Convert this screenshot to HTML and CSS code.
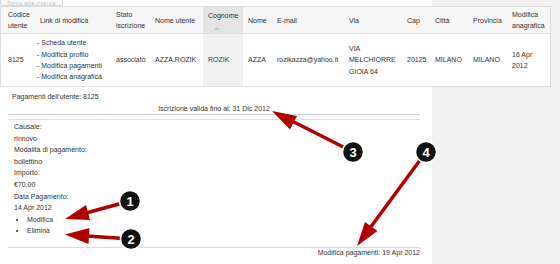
FILE: index.html
```html
<!DOCTYPE html>
<html lang="it">
<head>
    <meta charset="UTF-8">
    <meta name="viewport" content="width=device-width, initial-scale=1.0">
    <title>Pagamenti utente</title>
    <link rel="stylesheet" href="styles.css">
</head>
<body>
    <div class="main">
        <button class="back-btn">Torna alla ricerca</button>
        <table class="users">
            <colgroup>
                <col style="width: 34px">
                <col style="width: 76px">
                <col style="width: 39px">
                <col style="width: 53px">
                <col style="width: 40px">
                <col style="width: 29px">
                <col style="width: 72px">
                <col style="width: 58px">
                <col style="width: 28px">
                <col style="width: 38px">
                <col style="width: 39px">
                <col style="width: 43px">
            </colgroup>
            <thead>
                <tr>
                    <th class="first">Codice<br>utente</th>
                    <th>Link di modifica</th>
                    <th>Stato<br>iscrizione</th>
                    <th>Nome utente</th>
                    <th class="sorted">Cognome<span class="sort-arrow"></span></th>
                    <th>Nome</th>
                    <th>E-mail</th>
                    <th>Via</th>
                    <th>Cap</th>
                    <th>Città</th>
                    <th>Provincia</th>
                    <th>Modifica<br>anagrafica</th>
                </tr>
            </thead>
            <tbody>
                <tr>
                    <td class="first">8125</td>
                    <td>
                        <ul class="edit-links">
                            <li>- Scheda utente</li>
                            <li>- Modifica profilo</li>
                            <li>- Modifica pagamenti</li>
                            <li>- Modifica anagrafica</li>
                        </ul>
                    </td>
                    <td>associato</td>
                    <td>AZZA.ROZIK</td>
                    <td class="sorted">ROZIK</td>
                    <td>AZZA</td>
                    <td>rozikazza@yahoo.it</td>
                    <td>VIA<br>MELCHIORRE<br>GIOIA 64</td>
                    <td>20125</td>
                    <td>MILANO</td>
                    <td>MILANO</td>
                    <td>16 Apr<br>2012</td>
                </tr>
            </tbody>
        </table>

        <div class="payments">
            <div class="payments-title">Pagamenti dell'utente: 8125</div>
            <div class="valid-until">Iscrizione valida fino al: 31 Dic 2012</div>
            <div class="double-rule"></div>
            <div class="payment">
                <div>Causale:</div>
                <div>rinnovo</div>
                <div>Modalità di pagamento:</div>
                <div>bollettino</div>
                <div>Importo:</div>
                <div>€70.00</div>
                <div>Data Pagamento:</div>
                <div>14 Apr 2012</div>
                <ul class="actions">
                    <li>Modifica</li>
                    <li>Elimina</li>
                </ul>
            </div>
            <div class="last-change">Modifica pagamenti: 19 Apr 2012</div>
        </div>
    </div>

    <svg class="callouts" width="560" height="264" viewBox="0 0 560 264">
        <g class="arrow">
            <line x1="86" y1="213" x2="130" y2="201"/>
            <polygon points="65,219 90,220 86,205"/>
        </g>
        <g class="arrow">
            <line x1="87" y1="236" x2="131" y2="239"/>
            <polygon points="65,234.5 88.5,244 89.5,228"/>
        </g>
        <g class="arrow">
            <line x1="292" y1="121" x2="353" y2="152"/>
            <polygon points="272,111 290,129.5 297,116"/>
        </g>
        <g class="arrow">
            <line x1="370" y1="228" x2="426" y2="152"/>
            <polygon points="357,246 377.5,231 365,222"/>
        </g>
        <g class="badge">
            <circle cx="130" cy="201" r="10.5"/>
            <text x="130" y="201">1</text>
        </g>
        <g class="badge">
            <circle cx="131" cy="239" r="10.5"/>
            <text x="131" y="239">2</text>
        </g>
        <g class="badge">
            <circle cx="353" cy="152" r="10.5"/>
            <text x="353" y="152">3</text>
        </g>
        <g class="badge">
            <circle cx="426" cy="152" r="10.5"/>
            <text x="426" y="152">4</text>
        </g>
    </svg>
</body>
</html>
```

FILE: styles.css
```css
* {
    margin: 0;
    padding: 0;
    box-sizing: border-box;
}
html, body {
    width: 100%;
    height: 100%;
}
body {
    position: relative;
    overflow: hidden;
    font-family: "Liberation Sans", Arial, sans-serif;
    font-size: 7px;
    color: #333;
    background-color: #f1f1f1;
}
.main {
    width: 432px;
    height: 100%;
    background-color: #fff;
}
.back-btn {
    display: block;
    width: 63px;
    height: 6px;
    padding: 0 0 0 6px;
    font-family: inherit;
    font-size: 5px;
    line-height: 4px;
    letter-spacing: 0.6px;
    text-align: left;
    color: #c4c4c4;
    background-color: #f7f7f7;
    border: 1px solid #d6d6d6;
    border-top: none;
    border-radius: 0 0 2px 2px;
}
.users {
    width: 551px;
    table-layout: fixed;
    border-collapse: separate;
    border-spacing: 0;
    border: 1px solid #dedede;
    background-color: #fff;
}
.users th, .users td {
    padding: 0 2px 0 5px;
    text-align: left;
    vertical-align: middle;
    font-weight: normal;
    white-space: nowrap;
}
.users th {
    height: 27px;
    line-height: 11px;
    background-color: #f6f6f6;
    border-bottom: 1px solid #dedede;
}
.users td {
    height: 52px;
    line-height: 11.3px;
}
.users .first {
    padding-left: 7px;
}
.users th.sorted {
    background-color: #e4e4e4;
}
.users td.sorted {
    background-color: #f1f1f1;
}
.sort-arrow {
    display: block;
    width: 0;
    height: 0;
    margin: 6px 0 0 6px;
    border-left: 3px solid transparent;
    border-right: 3px solid transparent;
    border-bottom: 3px solid #c4c4c4;
}
.edit-links {
    list-style: none;
    margin-left: -3px;
}
.payments {
    padding: 4px 12px 0 8px;
}
.payments-title {
    padding-left: 4px;
    line-height: 11.5px;
}
.valid-until {
    text-align: center;
    line-height: 11.5px;
}
.double-rule {
    height: 6px;
    border-top: 1px solid #d4d4d4;
    border-bottom: 1px solid #e0e0e0;
}
.payment {
    padding: 1px 6px 10px;
    line-height: 11.6px;
}
.actions {
    padding-left: 13px;
}
.last-change {
    border-top: 1px solid #dcdcdc;
    text-align: right;
    line-height: 9px;
}
.callouts {
    position: absolute;
    top: 0;
    left: 0;
}
.arrow line {
    stroke: #b00000;
    stroke-width: 3.5;
}
.arrow polygon {
    fill: #b00000;
}
.badge circle {
    fill: #111;
    stroke: #fff;
    stroke-width: 1.5;
}
.badge text {
    fill: #fff;
    font-family: "Liberation Sans", Arial, sans-serif;
    font-size: 13px;
    font-weight: bold;
    text-anchor: middle;
    dominant-baseline: central;
}
```
